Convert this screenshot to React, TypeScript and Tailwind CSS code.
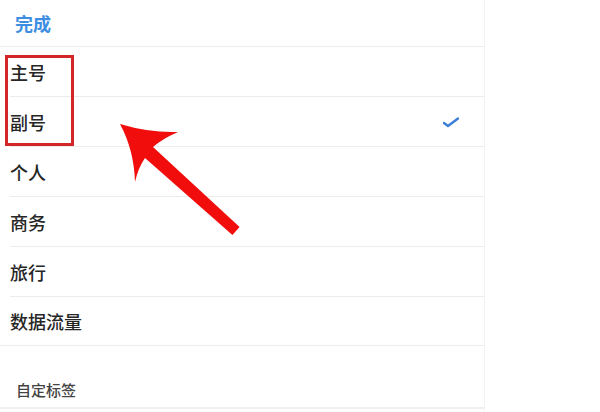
import React from "react";

const rows = ["主号", "副号", "个人", "商务", "旅行", "数据流量"];

export default function App() {
  return (
    <div
      className="relative w-[600px] h-[412px] overflow-hidden bg-white"
      style={{ fontFamily: '"Noto Sans CJK SC", "Noto Sans", sans-serif' }}
    >
      <div className="w-[485px] h-full border-r border-[#f3f3f3] flex flex-col">
        <div className="h-[47px] border-b border-[#ececec] flex items-center pl-[15px]">
          <span className="text-[18px] font-semibold text-[#3d8ee2] leading-none">完成</span>
        </div>
        {rows.map((r, i) => (
          <div key={r} className={i === rows.length - 1 ? "h-[49px] border-b border-[#ececec]" : "h-[50px] pl-[15px]"}>
            <div
              className={
                i === rows.length - 1
                  ? "h-full flex items-center pl-[10px]"
                  : "h-full border-b border-[#ececec] flex items-center -ml-[5px] pr-[25px]"
              }
            >
              <span className="text-[18px] font-medium text-[#262626] leading-none flex-1">{r}</span>
              {r === "副号" && (
                <svg width="16" height="12" viewBox="0 0 16 12">
                  <path d="M1 7 L5 10 L15 2.5" fill="none" stroke="#3b7fd6" strokeWidth="2.4" strokeLinecap="round" strokeLinejoin="round" />
                </svg>
              )}
            </div>
          </div>
        ))}
        <div className="h-[63px] border-b-2 border-[#efefef] flex items-end pb-[10px] pl-[16px]">
          <span className="text-[15px] font-medium text-[#444] leading-none">自定标签</span>
        </div>
      </div>

      <div className="absolute left-[5px] top-[55px] w-[69px] h-[91px] border-[3px] border-[#d3262b]" />

      <svg className="absolute left-0 top-0" width="600" height="412" viewBox="0 0 600 412">
        <path
          d="M120,124 Q150,133 178,132 Q162,139 153,147 L239.6,227 L232.4,235.1 L145,158 Q138,168 135,182 Q134,150 120,124 Z"
          fill="#f20d0d"
        />
      </svg>
    </div>
  );
}
